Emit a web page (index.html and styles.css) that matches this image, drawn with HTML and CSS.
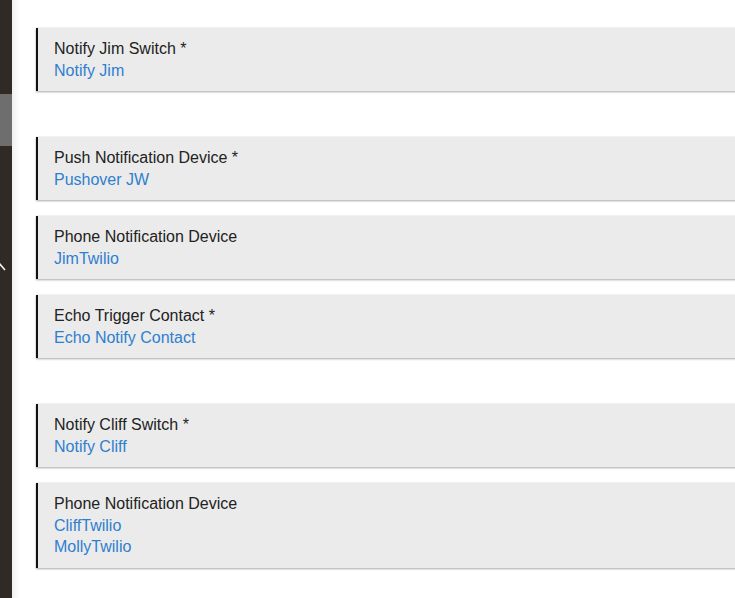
FILE: index.html
```html
<!DOCTYPE html>
<html>
<head>
<meta charset="utf-8">
<link rel="stylesheet" href="styles.css">
</head>
<body>
<div class="app">
  <aside class="sidebar">
    <div class="side-block"></div>
    <svg class="side-chev" width="8" height="12" viewBox="0 0 8 12"><path d="M-1 0 L5 7" stroke="#f2f2f2" stroke-width="1.6" fill="none"/></svg>
  </aside>
  <main class="content">
    <section class="group">
      <div class="card"><div class="label">Notify Jim Switch *</div><div class="value">Notify Jim</div></div>
    </section>
    <section class="group">
      <div class="card"><div class="label">Push Notification Device *</div><div class="value">Pushover JW</div></div>
      <div class="card"><div class="label">Phone Notification Device</div><div class="value">JimTwilio</div></div>
      <div class="card"><div class="label">Echo Trigger Contact *</div><div class="value">Echo Notify Contact</div></div>
    </section>
    <section class="group">
      <div class="card"><div class="label">Notify Cliff Switch *</div><div class="value">Notify Cliff</div></div>
      <div class="card"><div class="label">Phone Notification Device</div><div class="value">CliffTwilio</div><div class="value">MollyTwilio</div></div>
    </section>
  </main>
</div>
</body>
</html>
```

FILE: styles.css
```css
html, body {
  margin: 0;
  padding: 0;
  background: #fff;
  overflow: hidden;
}
body {
  font-family: "Liberation Sans", Arial, sans-serif;
  font-size: 16px;
}
.app {
  display: flex;
  width: 735px;
  height: 598px;
  overflow: hidden;
}
.sidebar {
  position: relative;
  width: 12px;
  flex: none;
  background: #302a27;
}
.side-block {
  margin-top: 94px;
  height: 52px;
  background: #6e6e6e;
}
.side-chev {
  position: absolute;
  left: 0;
  top: 263px;
}
.content {
  flex: 1;
  padding: 28px 0 0 24px;
  background: linear-gradient(to right, #f0f0f0 0, #fff 8px);
  display: flex;
  flex-direction: column;
  gap: 46px;
  min-width: 0;
}
.group {
  display: flex;
  flex-direction: column;
  gap: 16px;
}
.card {
  width: 760px;
  background: #ebebeb;
  border-left: 2px solid #111;
  padding: 10px 16px;
  line-height: 21.5px;
  box-shadow: 0 1px 2px rgba(0,0,0,0.35), 0 -1px 1px rgba(0,0,0,0.03);
}
.label {
  color: #222;
}
.value {
  color: #2f7fcf;
}
```
